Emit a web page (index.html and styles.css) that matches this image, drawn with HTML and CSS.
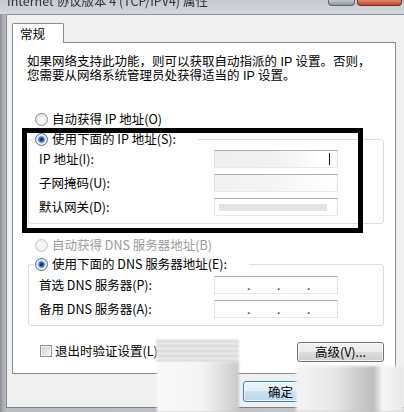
FILE: index.html
```html
<!DOCTYPE html>
<html lang="zh-CN">
<head>
<meta charset="utf-8">
<title>Internet 协议版本 4 (TCP/IPV4) 属性</title>
<link rel="stylesheet" href="styles.css">
</head>
<body>
<div class="window">
  <div class="titlebar">
    <span class="title">Internet 协议版本 4 (TCP/IPV4) 属性</span>
    <div class="caption">
      <span class="cbtn help"></span>
      <span class="cbtn close"></span>
    </div>
  </div>
  <div class="dialog">
    <div class="tabs"><div class="tab">常规</div></div>
    <div class="panel">
      <div class="intro">
        <div class="intro-line">如果网络支持此功能，则可以获取自动指派的 IP 设置。否则，</div>
        <div class="intro-line">您需要从网络系统管理员处获得适当的 IP 设置。</div>
      </div>

      <div class="radio-row r1"><span class="radio"></span><span>自动获得 IP 地址(O)</span></div>

      <div class="group ip">
        <div class="group-head"><span class="radio on"></span><span>使用下面的 IP 地址(S):</span></div>
        <div class="fields">
          <label>IP 地址(I):</label>
          <div class="tb tb1"><span class="caret"></span></div>
          <label>子网掩码(U):</label>
          <div class="tb tb2"></div>
          <label>默认网关(D):</label>
          <div class="tb tb3"></div>
        </div>
      </div>

      <div class="radio-row r3 disabled"><span class="radio dis"></span><span>自动获得 DNS 服务器地址(B)</span></div>

      <div class="group dns">
        <div class="group-head"><span class="radio on"></span><span>使用下面的 DNS 服务器地址(E):</span></div>
        <div class="fields dnsfields">
          <label>首选 DNS 服务器(P):</label>
          <div class="tb ipbox"><span class="dot">.</span><span class="dot">.</span><span class="dot">.</span></div>
          <label>备用 DNS 服务器(A):</label>
          <div class="tb ipbox"><span class="dot">.</span><span class="dot">.</span><span class="dot">.</span></div>
        </div>
      </div>

      <div class="bottom-row">
        <div class="check"><span class="cb"></span><span>退出时验证设置(L)</span></div>
        <button class="btn adv">高级(V)...</button>
      </div>
    </div>
    <div class="actions">
      <button class="btn ok">确定</button>
      <button class="btn cancel">取消</button>
    </div>
  </div>

  <div class="highlight"></div>
  <div class="smear sm1"></div>
  <div class="smear sm2"></div>
  <div class="smear sm3"></div>
</div>
</body>
</html>
```
FILE: styles.css
```css
html, body {
  margin: 0;
  padding: 0;
}
body {
  font-family: "Noto Sans CJK SC", "Noto Sans", sans-serif;
  font-size: 12.5px;
  color: #000;
  background: #f0f0f0;
}
.window {
  position: relative;
  width: 404px;
  height: 412px;
  overflow: hidden;
  display: flex;
  flex-direction: column;
  box-sizing: border-box;
  padding-bottom: 4px;
  background: linear-gradient(90deg, #8c9095 0, #a9adb1 3px, #b9bcc0 6px, #c4c7ca 100%);
}

/* title bar */
.titlebar {
  height: 14px;
  flex: none;
  display: flex;
  overflow: hidden;
  background: linear-gradient(180deg, #c4cad0, #d3d8dc);
}
.title {
  margin: -7px 0 0 7px;
  line-height: 16px;
  font-size: 12.5px;
  color: #2e3236;
  white-space: nowrap;
  filter: blur(0.35px);
}
.caption {
  margin-left: auto;
  margin-right: 2px;
  display: flex;
  gap: 2px;
  align-self: flex-start;
}
.cbtn {
  height: 6px;
  box-sizing: border-box;
  border: 1px solid #5f656c;
  border-top: none;
  border-radius: 0 0 4px 4px;
}
.help {
  width: 27px;
  background: linear-gradient(180deg, #c3c9cf, #8f969e);
}
.close {
  width: 45px;
  border-color: #7b2c1c;
  background: linear-gradient(180deg, #de8a70, #c6452b);
}

/* dialog */
.dialog {
  flex: 1;
  margin-left: 6px;
  border-left: 1px solid #868b90;
  border-top: 1px solid #8d9296;
  border-bottom: 1px solid #7c8085;
  background: #f0f0f0;
  padding: 8px 8px 0 5px;
  display: flex;
  flex-direction: column;
}
.tabs {
  display: flex;
}
.tab {
  width: 52px;
  height: 20px;
  box-sizing: border-box;
  border: 1px solid #898c95;
  border-bottom: none;
  border-radius: 2px 2px 0 0;
  background: #fff;
  padding-left: 7px;
  line-height: 19px;
  margin-bottom: -1px;
  position: relative;
  z-index: 1;
}
.panel {
  background: #fff;
  border: 1px solid #898c95;
  padding: 12px 11px 11px 15px;
}
.intro {
  margin-left: -1px;
  display: flex;
  flex-direction: column;
  font-family: "Liberation Sans", "Noto Sans CJK SC", sans-serif;
}
.intro-line {
  height: 14px;
  line-height: 14px;
  white-space: nowrap;
}

/* radios */
.radio-row {
  display: flex;
  align-items: center;
  gap: 4px;
  height: 16px;
  line-height: 16px;
  padding-left: 7px;
}
.r1 {
  margin-top: 28px;
}
.r3 {
  margin-top: 13px;
}
.disabled {
  color: #9b9b9b;
}
.radio {
  width: 13px;
  height: 13px;
  box-sizing: border-box;
  border-radius: 50%;
  border: 1px solid #8e8f8f;
  background: radial-gradient(circle at 60% 60%, #ffffff 0, #f2f2f2 40%, #d6d6d6 100%);
  flex: none;
}
.radio.on {
  border-color: #5a6b80;
  background: radial-gradient(circle, #0d2a55 0, #1c4a8a 1.6px, #4e86c6 2.6px, #a9cbef 3.6px, #eef3f8 4.4px, #d8dde2 100%);
}
.radio.dis {
  border-color: #c6c6c6;
  background: radial-gradient(circle, #fafafa, #e9e9e9);
}

/* group boxes */
.group {
  border: 1px solid #d5dfe5;
  border-radius: 3px;
  padding: 0 0 7px 10px;
  margin-top: 12px;
}
.group.dns {
  margin-top: 11px;
}
.group-head {
  display: flex;
  align-items: center;
  gap: 4px;
  height: 16px;
  line-height: 16px;
  width: max-content;
  margin: -9px 0 0 -5px;
  padding: 0 22px 0 1px;
  background: #fff;
}
.fields {
  display: grid;
  grid-template-columns: 175px 124px;
  grid-auto-rows: 18px;
  row-gap: 6px;
  margin-top: 3px;
}
.fields.dnsfields {
  margin-top: 4px;
}
.fields label {
  line-height: 18px;
  white-space: nowrap;
}
.tb {
  box-sizing: border-box;
  border: 1px solid;
  border-color: #abadb3 #dbdfe6 #e3e9ef #e2e3ea;
  background: #fff;
  display: flex;
  align-items: center;
}
.tb1 {
  justify-content: flex-end;
  background: linear-gradient(90deg, #efefef 0, #f1f1f1 45%, #f8f8f8 70%, #fff 85%);
}
.caret {
  width: 1px;
  height: 12px;
  background: #111;
  margin-right: 7px;
}
.tb2 {
  background: linear-gradient(90deg, #f2f2f2 0, #f5f5f5 50%, #fcfcfc 80%, #fff 100%);
}
.tb3 {
  background: linear-gradient(#e4e4e4, #e4e4e4) no-repeat 4px 5px / 108px 7px, #fff;
}
.ipbox {
  padding-left: 32px;
  gap: 26px;
}
.dot {
  width: 4px;
  line-height: 14px;
  color: #4a4a4a;
  text-shadow: 0 0 2px #bbb;
}

/* bottom row */
.bottom-row {
  display: flex;
  justify-content: space-between;
  align-items: flex-start;
  margin-top: 16px;
  padding-left: 12px;
}
.check {
  display: flex;
  align-items: center;
  gap: 3px;
  height: 16px;
  line-height: 16px;
  margin-top: 1px;
}
.cb {
  width: 12px;
  height: 12px;
  box-sizing: border-box;
  border: 1px solid #8f8f8f;
  background: linear-gradient(135deg, #cfcfcf, #f2f2f2);
  box-shadow: inset 0 0 0 1px #f4f4f4;
  flex: none;
}
.btn {
  font: inherit;
  color: #000;
  height: 20px;
  box-sizing: border-box;
  border: 1px solid #707070;
  border-radius: 3px;
  padding: 0;
  line-height: 18px;
  background: linear-gradient(180deg, #f2f2f2 0, #ebebeb 50%, #dddddd 50%, #cfcfcf 100%);
  box-shadow: inset 0 0 0 1px rgba(255, 255, 255, 0.7);
}
.adv {
  width: 87px;
}
.actions {
  display: flex;
  justify-content: flex-end;
  gap: 6px;
  margin: 7px -3px 0 0;
}
.ok, .cancel {
  width: 75px;
  height: 21px;
}
.ok {
  border-color: #3c7fb1;
  background: linear-gradient(180deg, #eaf4fa 0, #dfeef7 50%, #c9e2f1 50%, #b8d8ec 100%);
}

/* annotation and watermark overlays */
.highlight {
  position: absolute;
  left: 22px;
  top: 128px;
  width: 341px;
  height: 105px;
  box-sizing: border-box;
  border: 5px solid #000;
}
.smear {
  position: absolute;
}
.sm1 {
  left: 156px;
  top: 340px;
  width: 83px;
  height: 22px;
  background: repeating-linear-gradient(180deg, #c6c6c6 0, #c6c6c6 2px, #ececec 2px, #ececec 5px);
  filter: blur(0.8px);
  opacity: 0.85;
}
.sm2 {
  left: 157px;
  top: 362px;
  width: 82px;
  height: 50px;
  background: linear-gradient(90deg, #fafafa 0, #f4f4f4 55%, #d9d9d9 85%, #c8c8c8 100%);
  filter: blur(1px);
}
.sm3 {
  left: 296px;
  top: 366px;
  width: 108px;
  height: 46px;
  background: linear-gradient(90deg, #f4f4f4 0, #e6e6e6 38%, #d2d2d2 52%, #bcbcbc 72%, #f7f7f7 80%, #e8e8e8 100%);
  filter: blur(1.5px);
}
```
